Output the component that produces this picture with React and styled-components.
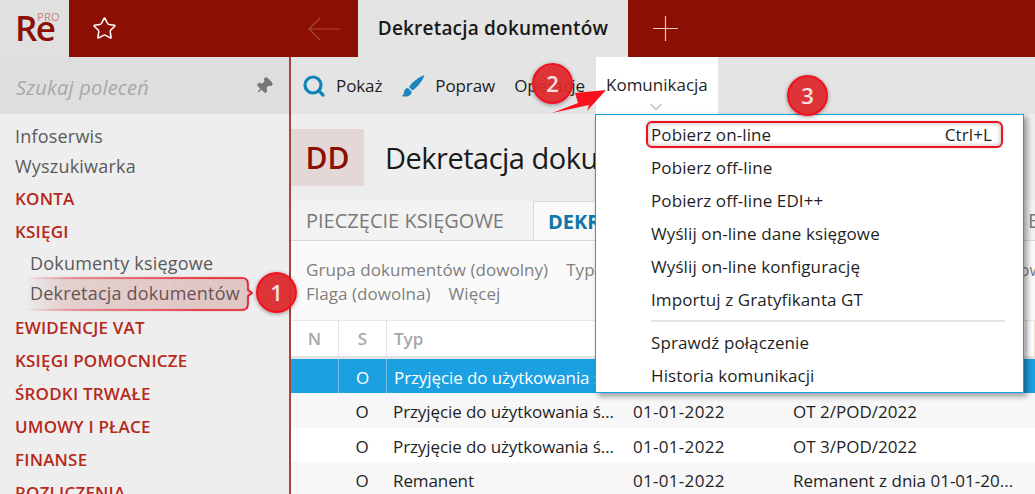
import React from "react";
import styled, { createGlobalStyle } from "styled-components";
import { Search, Star, Pin, Plus, ChevronDown } from "lucide-react";

const sideItems = [
  { label: "Infoserwis", kind: "plain" },
  { label: "Wyszukiwarka", kind: "plain" },
  { label: "KONTA", kind: "group" },
  { label: "KSIĘGI", kind: "group" },
  { label: "Dokumenty księgowe", kind: "sub" },
  { label: "Dekretacja dokumentów", kind: "sub", last: true },
  { label: "EWIDENCJE VAT", kind: "group" },
  { label: "KSIĘGI POMOCNICZE", kind: "group" },
  { label: "ŚRODKI TRWAŁE", kind: "group" },
  { label: "UMOWY I PŁACE", kind: "group" },
  { label: "FINANSE", kind: "group" },
  { label: "ROZLICZENIA", kind: "group" },
];

const rows = [
  ["O", "Przyjęcie do użytkowania środka", "01-01-2022", "OT 1/POD/2022"],
  ["O", "Przyjęcie do użytkowania środka", "01-01-2022", "OT 2/POD/2022"],
  ["O", "Przyjęcie do użytkowania środka", "01-01-2022", "OT 3/POD/2022"],
  ["O", "Remanent", "01-01-2022", "Remanent z dnia 01-01-20..."],
];

const menuTop = ["Pobierz off-line", "Pobierz off-line EDI++", "Wyślij on-line dane księgowe", "Wyślij on-line konfigurację", "Importuj z Gratyfikanta GT"];
const menuBottom = ["Sprawdź połączenie", "Historia komunikacji"];

const App = () => {
  return (
    <>
      <Global />
      <Page>
        <TopBar>
          <Logo>
            Re<sup>PRO</sup>
          </Logo>
          <StarSlot>
            <Star size={25} strokeWidth={1.5} color="#fff" />
          </StarSlot>
          <BackSlot>
            <svg width="32" height="24" viewBox="0 0 32 24" fill="none" stroke="#a8473c" strokeWidth="1.2">
              <path d="M1 12 H32 M12 1 L1 12 L12 23" />
            </svg>
          </BackSlot>
          <ActiveTab>Dekretacja dokumentów</ActiveTab>
          <PlusSlot>
            <Plus size={41} strokeWidth={0.7} color="#e8c8c4" />
          </PlusSlot>
        </TopBar>
        <Body>
          <Sidebar>
            <SearchBar>
              <SearchHint>Szukaj poleceń</SearchHint>
              <Pin size={18} color="#777" fill="#777" style={{ transform: "rotate(45deg)" }} />
            </SearchBar>
            <SideList>
              {sideItems.map((item) => (
                <SideItem key={item.label} $kind={item.kind} $last={item.last}>
                  {item.label}
                </SideItem>
              ))}
            </SideList>
          </Sidebar>
          <Main>
            <Toolbar>
              <ToolButton>
                <Search size={24} strokeWidth={3.2} color="#0f86b8" />
                Pokaż
              </ToolButton>
              <ToolButton>
                <BrushIcon />
                Popraw
              </ToolButton>
              <ToolButton>Operacje</ToolButton>
              <OpenTool>
                Komunikacja
                <ChevronSlot>
                  <ChevronDown size={20} strokeWidth={1} color="#666" />
                </ChevronSlot>
              </OpenTool>
            </Toolbar>
            <TitleRow>
              <Tile>DD</Tile>
              <Title>Dekretacja dokumentów</Title>
            </TitleRow>
            <Tabs>
              <Tab $w={242} $pad={15}>PIECZĘCIE KSIĘGOWE</Tab>
              <Tab $w={300} $pad={14} $active>DEKRETACJA</Tab>
              <Tab $w={202} $pad={195}>E</Tab>
            </Tabs>
            <Filters>
              <FilterLine>
                <span>Grupa dokumentów (dowolny)</span>
                <span>Typ (dowolny)</span>
                <FarFilter>(dowolny)</FarFilter>
              </FilterLine>
              <FilterLine>
                <span>Flaga (dowolna)</span>
                <span>Więcej</span>
              </FilterLine>
            </Filters>
            <HeadRow>
              <Cell $w={47} $center>N</Cell>
              <Cell $w={48} $center $line>S</Cell>
              <Cell $w={240} $line>Typ</Cell>
              <Cell $w={160} />
              <Cell $w={240} />
              <EdgeCell />
            </HeadRow>
            {rows.map((row, i) => (
              <DataRow key={i} $selected={i === 0} $odd={i % 2 === 1}>
                <Cell $w={47} />
                <Cell $w={48} $center $line={i === 0}>{row[0]}</Cell>
                <TypeCell $w={240} $line={i === 0}>{row[1]}</TypeCell>
                <DateCell $w={160}>{row[2]}</DateCell>
                <Cell $w={240}>{row[3]}</Cell>
              </DataRow>
            ))}
          </Main>
        </Body>

        <Menu>
          <HotItem>
            Pobierz on-line
            <span>Ctrl+L</span>
          </HotItem>
          {menuTop.map((label) => (
            <MenuItem key={label}>{label}</MenuItem>
          ))}
          <MenuLine />
          {menuBottom.map((label) => (
            <MenuItem key={label}>{label}</MenuItem>
          ))}
        </Menu>

        <Callout viewBox="0 0 232 37">
          <defs>
            <linearGradient id="calloutFill" x1="0" x2="1" y1="0" y2="0">
              <stop offset="0" stopColor="#b8413a" stopOpacity="0" />
              <stop offset="0.18" stopColor="#b8413a" stopOpacity="0.14" />
              <stop offset="1" stopColor="#b8413a" stopOpacity="0.18" />
            </linearGradient>
            <linearGradient id="calloutLine" x1="0" x2="1" y1="0" y2="0">
              <stop offset="0" stopColor="#f02030" stopOpacity="0" />
              <stop offset="0.25" stopColor="#f02030" stopOpacity="0.55" />
              <stop offset="0.8" stopColor="#f01020" />
            </linearGradient>
          </defs>
          <path
            d="M0 2 H218 Q224 2 224 8 V14 L228 17 L224 20 V28 Q224 34 218 34 H0"
            fill="url(#calloutFill)"
            stroke="url(#calloutLine)"
            strokeWidth="1.6"
          />
        </Callout>
        <Badge $x={256} $y={272}>1</Badge>
        <Badge $x={532} $y={63}>2</Badge>
        <Badge $x={787} $y={75}>3</Badge>
        <Arrow viewBox="0 0 60 30">
          <path d="M56 4 L37 25 L39 19 L2 27 L28 17 L25 7 Z" fill="#f8101c" />
        </Arrow>
      </Page>
    </>
  );
};

const BrushIcon = () => (
  <svg width="24" height="24" viewBox="0 0 24 24">
    <path d="M23.5 1 C18 3 11 8 8 13 L11.5 16.5 C17 12.5 21.5 7 23.5 1 Z" fill="#1b86bd" />
    <path d="M7 14 C3 14 3.5 18 2.5 20 C2 21 1 22 1 22 C5 23.5 11 22 10.5 17.5 Z" fill="#1b86bd" />
  </svg>
);

const Global = createGlobalStyle`
  html, body {
    margin: 0;
    padding: 0;
    background: #fff;
  }
  body {
    font-family: "Open Sans", "Noto Sans", sans-serif;
    overflow: hidden;
  }
`;
const Page = styled.div`
  position: relative;
  width: 1035px;
  height: 494px;
  overflow: hidden;
  display: flex;
  flex-direction: column;
`;
const TopBar = styled.div`
  display: flex;
  align-items: stretch;
  height: 57px;
  flex-shrink: 0;
  background: #8b1003;
`;
const Logo = styled.div`
  width: 69px;
  background: #e0e0e0;
  color: #8b1003;
  font-size: 35px;
  font-weight: 600;
  line-height: 55px;
  padding-left: 15px;
  box-sizing: border-box;
  letter-spacing: -1.5px;
  sup {
    position: absolute;
    top: 12px;
    left: 37px;
    font-size: 11px;
    line-height: 10px;
    letter-spacing: 0.3px;
    font-weight: 400;
    color: #c4837c;
  }
`;
const StarSlot = styled.div`
  width: 70px;
  display: flex;
  align-items: center;
  justify-content: center;
`;
const BackSlot = styled.div`
  width: 219px;
  display: flex;
  align-items: center;
  justify-content: flex-end;
  padding-right: 18px;
  box-sizing: border-box;
`;
const ActiveTab = styled.div`
  width: 270px;
  background: #e4e4e4;
  color: #1a1a1a;
  font-size: 19px;
  font-weight: 600;
  line-height: 57px;
  text-align: center;
  letter-spacing: 0.2px;
  white-space: nowrap;
`;
const PlusSlot = styled.div`
  width: 75px;
  display: flex;
  align-items: center;
  justify-content: center;
`;
const Body = styled.div`
  display: flex;
  flex: 1;
  min-height: 0;
`;
const Sidebar = styled.div`
  width: 289px;
  flex-shrink: 0;
  background: #eeeeee;
  border-right: 2px solid #a8443a;
  box-sizing: content-box;
`;
const SearchBar = styled.div`
  height: 57px;
  background: #dedede;
  display: flex;
  align-items: center;
  justify-content: space-between;
  padding: 0 16px;
`;
const SearchHint = styled.span`
  padding-top: 4px;
  font-size: 20px;
  font-style: italic;
  color: #a8a8a8;
  letter-spacing: 0.2px;
`;
const SideList = styled.div`
  padding-top: 6.5px;
`;
const SideItem = styled.div`
  height: ${(p) => (p.$kind === "plain" ? 30.5 : p.$kind === "sub" ? 30 : 33)}px;
  line-height: ${(p) => (p.$kind === "plain" ? 31 : p.$kind === "sub" ? 30 : 33)}px;
  margin-bottom: ${(p) => (p.$last ? 3 : 0)}px;
  padding-left: ${(p) => (p.$kind === "sub" ? 30 : 15)}px;
  font-size: ${(p) => (p.$kind === "group" ? 17 : 18)}px;
  font-weight: ${(p) => (p.$kind === "group" ? 600 : 400)};
  color: ${(p) => (p.$kind === "group" ? "#b5281a" : "#5a5a5a")};
  letter-spacing: 0.2px;
  white-space: nowrap;
`;
const Main = styled.div`
  flex: 1;
  min-width: 0;
  background: #eeeeee;
`;
const Toolbar = styled.div`
  height: 57px;
  background: #e4e4e4;
  display: flex;
  align-items: stretch;
  padding-left: 11px;
  gap: 19px;
`;
const ToolButton = styled.div`
  display: flex;
  align-items: center;
  gap: 10px;
  font-size: 17px;
  line-height: 55px;
  color: #1f1f1f;
  letter-spacing: -0.1px;
  white-space: nowrap;
`;
const OpenTool = styled.div`
  position: relative;
  width: 122px;
  margin-left: -8px;
  background: #fff;
  font-size: 17px;
  line-height: 55px;
  text-align: center;
  color: #1f1f1f;
`;
const ChevronSlot = styled.span`
  position: absolute;
  left: 50px;
  top: 40px;
  line-height: 0;
`;
const TitleRow = styled.div`
  height: 87px;
  display: flex;
  align-items: center;
`;
const Tile = styled.div`
  width: 73px;
  height: 57px;
  background: #e4d8d6;
  color: #8b1003;
  font-size: 30px;
  font-weight: 600;
  line-height: 57px;
  text-align: center;
`;
const Title = styled.div`
  margin-left: 21px;
  font-size: 29px;
  line-height: 55px;
  color: #1a1a1a;
  white-space: nowrap;
  letter-spacing: -0.5px;
`;
const Tabs = styled.div`
  height: 40px;
  display: flex;
  align-items: stretch;
  border-bottom: 1px solid #d8d8d8;
  box-sizing: border-box;
`;
const Tab = styled.div`
  width: ${(p) => p.$w}px;
  flex-shrink: 0;
  box-sizing: border-box;
  padding-left: ${(p) => p.$pad}px;
  font-size: 20px;
  line-height: 40px;
  font-weight: ${(p) => (p.$active ? 700 : 400)};
  color: ${(p) => (p.$active ? "#0f76a8" : "#7a7a7a")};
  background: ${(p) => (p.$active ? "#fafafa" : "#f2f2f2")};
  border: ${(p) => (p.$active ? "1px solid #d8d8d8" : "none")};
  border-bottom: none;
  white-space: nowrap;
  overflow: hidden;
`;
const Filters = styled.div`
  height: 80px;
  background: #fafafa;
  border-bottom: 1px solid #e8e8e8;
  box-sizing: border-box;
  padding: 17px 15px 0;
  font-size: 17px;
  line-height: 24px;
  color: #7f7f7f;
  letter-spacing: 0.05px;
  overflow: hidden;
`;
const FilterLine = styled.div`
  display: flex;
  gap: 18px;
  white-space: nowrap;
`;
const FarFilter = styled.span`
  margin-left: 309px;
`;
const HeadRow = styled.div`
  height: 38px;
  background: #fff;
  display: flex;
  align-items: stretch;
  font-size: 17px;
  font-weight: 600;
  line-height: 36px;
  color: #a8a8a8;
  border-bottom: 3px solid #e4e4e4;
  box-sizing: border-box;
`;
const DataRow = styled.div`
  height: 34.3px;
  display: flex;
  align-items: stretch;
  line-height: 38px;
  font-size: 17px;
  white-space: nowrap;
  color: ${(p) => (p.$selected ? "#fff" : "#1f1f1f")};
  background: ${(p) => (p.$selected ? "#1ba1e2" : p.$odd ? "#f7f7f7" : "#fff")};
`;
const Cell = styled.div`
  width: ${(p) => p.$w}px;
  flex-shrink: 0;
  box-sizing: border-box;
  padding-left: ${(p) => (p.$center ? 0 : 7)}px;
  text-align: ${(p) => (p.$center ? "center" : "left")};
  overflow: hidden;
  ${HeadRow} & {
    border-left: ${(p) => (p.$line ? "1px dotted #c8c8c8" : "none")};
  }
  ${DataRow} & {
    border-left: ${(p) => (p.$line ? "1px solid #6fc3ec" : "none")};
  }
`;
const TypeCell = styled(Cell)`
  padding-right: 6px;
  letter-spacing: -0.1px;
  text-overflow: ellipsis;
`;
const DateCell = styled(Cell)`
  letter-spacing: 0.3px;
`;
const EdgeCell = styled.div`
  width: 9px;
  flex-shrink: 0;
  box-sizing: border-box;
  border-left: 1px dotted #c8c8c8;
  border-right: 1px solid #f3dcc4;
`;
const Menu = styled.div`
  position: absolute;
  left: 595px;
  top: 114px;
  width: 429px;
  height: 279px;
  box-sizing: border-box;
  background: #fff;
  border: 1px solid #1ba1e2;
  box-shadow: 3px 3px 6px rgba(0, 0, 0, 0.4);
  padding: 3px 0 0 55px;
  font-size: 17px;
  color: #1f1f1f;
  letter-spacing: 0.1px;
`;
const MenuItem = styled.div`
  height: 33px;
  line-height: 33px;
  white-space: nowrap;
`;
const HotItem = styled(MenuItem)`
  display: flex;
  justify-content: space-between;
  height: 27px;
  line-height: 24px;
  margin: 3px 20px 3px -5px;
  padding: 0 9px 0 3px;
  border: 2px solid #f01020;
  border-radius: 6px;
  box-shadow: inset 0 0 5px rgba(0, 0, 0, 0.3), 0 0 2px rgba(0, 0, 0, 0.2);
  box-sizing: border-box;
`;
const MenuLine = styled.div`
  height: 2px;
  background: #e4e4e4;
  margin: 4px 18px 4px 0;
`;
const Callout = styled.svg`
  position: absolute;
  left: 24px;
  top: 276px;
  width: 232px;
  height: 37px;
  filter: drop-shadow(0 0 1px rgba(120, 0, 0, 0.25));
`;
const Badge = styled.div`
  position: absolute;
  left: ${(p) => p.$x}px;
  top: ${(p) => p.$y}px;
  width: 41px;
  height: 41px;
  border-radius: 50%;
  background: rgba(221, 40, 44, 0.94);
  border: 2px solid #f01020;
  box-sizing: border-box;
  box-shadow: 0 1px 4px rgba(0, 0, 0, 0.4);
  color: #f6e0e0;
  font-size: 22px;
  font-weight: 600;
  line-height: 37px;
  text-align: center;
`;
const Arrow = styled.svg`
  position: absolute;
  left: 550px;
  top: 86px;
  width: 60px;
  height: 30px;
`;

export default App;
